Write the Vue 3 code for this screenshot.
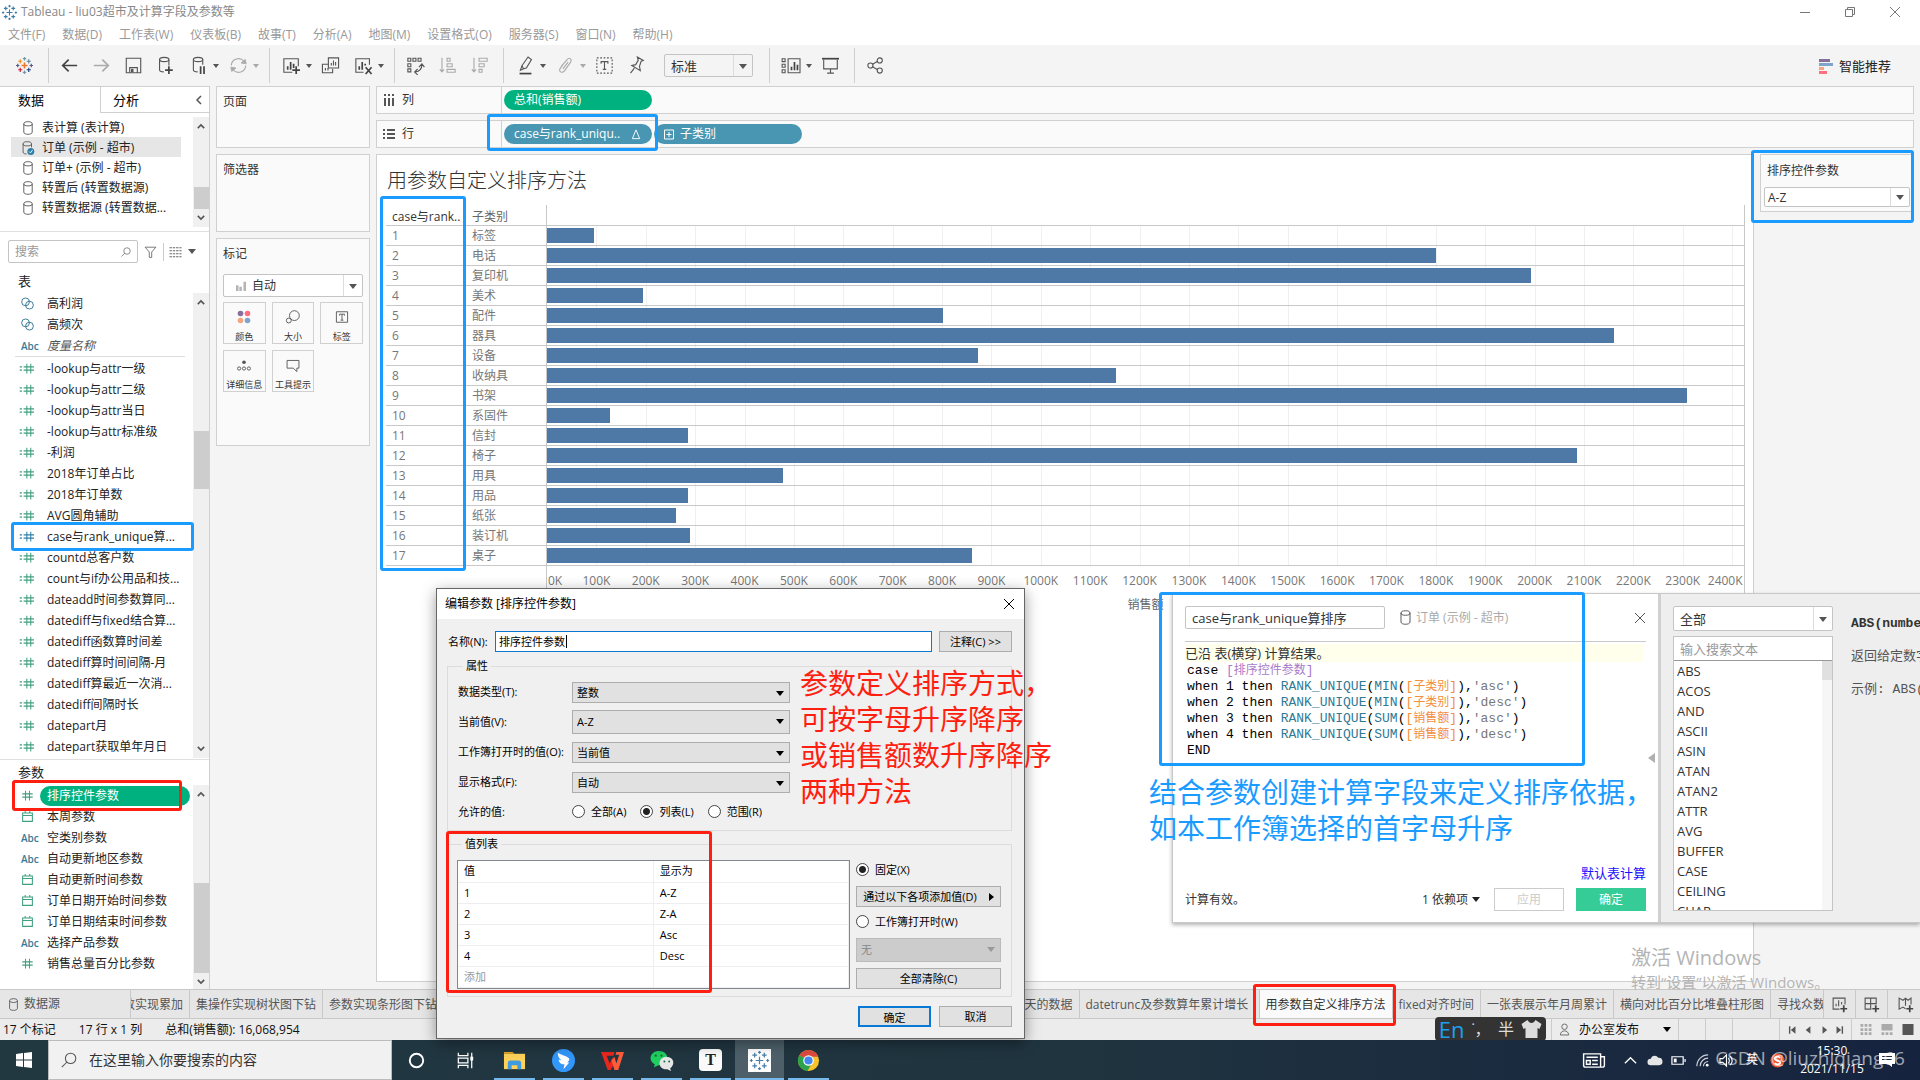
<script setup>
import { ref } from 'vue'

const menus = ['文件(F)', '数据(D)', '工作表(W)', '仪表板(B)', '故事(T)', '分析(A)', '地图(M)', '设置格式(O)', '服务器(S)', '窗口(N)', '帮助(H)']

// 20x20 icons
const icons = {
  logo: '<g fill="none" stroke-width="1.4"><path stroke="#e8762c" stroke-width="1.8" d="M10 6.500v7M6.500 10h7"/><path stroke="#c72035" d="M5 12.500v5M2.500 15h5"/><path stroke="#5b879b" d="M15 2.500v5M12.500 5h5"/><path stroke="#eb912c" d="M5 2.500v5M2.500 5h5"/><path stroke="#1f457e" d="M15 12.500v5M12.500 15h5"/><path stroke="#7199a6" d="M10 0v4M8 2h4M10 16v4M8 18h4"/><path stroke="#59598b" d="M2 8v4M0 10h4M18 8v4M16 10h4"/></g>',
  back: '<path class="s2" d="M19 10H2M9 3l-7 7 7 7"/>',
  forward: '<path class="s2 dim" d="M1 10h17M11 3l7 7-7 7"/>',
  save: '<path class="s" d="M1.500 1.500h17v17h-17zM5.500 18.500v-6h9v6"/><path d="M7 14h3v4H7z" fill="#555"/>',
  dbAdd: '<ellipse class="s" cx="8.500" cy="3" rx="5.500" ry="2.500"/><path class="s" d="M3 3v12c0 1.500 2 2.500 5 2.500M14 3v7"/><path class="s2" d="M14 11v9M9.500 15.500h9"/>',
  dbPause: '<ellipse class="s" cx="9.500" cy="3" rx="5.500" ry="2.500"/><path class="s" d="M4 3v12c0 1.500 2 2.500 5 2.500M15 3v6"/><path class="s2" d="M12.500 11v9M16.500 11v9"/>',
  refresh: '<path class="s dim" d="M1.500 10a8.500 8.500 0 0 1 15-5M18.500 10a8.500 8.500 0 0 1-15 5"/><path fill="#aaa" d="M19 8l-6-1 5-4zM1 12l6 1-5 4z"/>',
  newSheet: '<path class="s" d="M11 18H1v-16h17V11"/><path class="s2" d="M5.500 15v-4M9 15V6M12.500 13V8M15.500 11v9M11 15.500h9"/>',
  duplicate: '<path class="s" d="M8 8.500H0.500v10h12V14M7.500 1h12v12h-12z"/><path class="s" d="M4 16v-3M7 16v-3M11 10V7M13.500 10V4M16 10V6"/>',
  clearSheet: '<path class="s" d="M10 18H1v-16h16V9"/><path class="s2" d="M5 15v-4M8.500 15V6M12 10V8M12.500 12l7 8M19.500 12l-7 8"/>',
  swap: '<path class="s" d="M1 1.500h3.500V5H1zM7 1.500h3.500V5H7zM13 1.500h3.500V5H13zM1 8h3.500v3.500H1zM1 14h3.500v3.500H1zM17.500 9c0 5-2 8-8 8.500M14 12l3.500-4 3 4M12.500 14L9 17.500l3.500 3.500"/>',
  sortAsc: '<path class="s dim" d="M3.500 1v16M1 14.500l2.500 3 2.500-3M9.500 1.500h3.500v3.500H9.500zM9.500 8h6v3.500h-6zM9.500 14.500h9.500V18H9.500z"/>',
  sortDesc: '<path class="s dim" d="M3.500 1v16M1 14.500l2.500 3 2.500-3M9.500 1.500h9.500v3.500H9.500zM9.500 8h6v3.500h-6zM9.500 14.500h3.500V18H9.500z"/>',
  highlight: '<path class="s" d="M7.500 14L6 10l7-10 4 3-6 10zM7.500 14L4 15.500 6 10"/><path class="s2" d="M3 19.500h14"/>',
  clip: '<path class="s dim" d="M5 11l7-8c2-3 6-1 4 3l-7 10c-3 4-8 1-5-3l6-8M7 14l6-8"/>',
  text: '<path class="s" stroke-dasharray="2 2" d="M1 1h18v18H1z"/><path class="s" d="M6 8V5.500h8V8M10 5.500v9M8 14.500h4"/>',
  pin: '<path class="s" d="M11 0l7 4-2.500 1-2 6 1 5-10-6 4.500-1 3-5zM7.500 13L3 19"/>',
  cards: '<path class="s" d="M-1 2h3.500v3.500H-1zM-1 8.500h3.500V12H-1zM-1 15h3.500v3.500H-1zM6 2h14v16.500H6z"/><path class="s2" d="M10 15.500v-4M13.500 15.500V6M17 15.500V9"/>',
  present: '<path class="s2" d="M0 2h20"/><path class="s" d="M2 3v11h16V3M10 14v5M6 19h8"/>',
  share: '<g class="s"><circle cx="4" cy="10" r="3"/><circle cx="15" cy="4" r="3"/><circle cx="15" cy="16" r="3"/><path d="M6.500 8.500l6-3.500M6.500 11.500l6 3.500"/></g>',
  db: '<ellipse class="s" cx="10" cy="4" rx="6" ry="3"/><path class="s" d="M4 4v12c0 4 12 4 12 0V4"/>',
  dbOk: '<ellipse class="s" cx="9" cy="4" rx="6" ry="3"/><path class="s" d="M3 4v12c0 2 3 2.500 5 2.500M15 4v5"/><circle cx="14" cy="15" r="5" fill="#2f80a8"/><path d="M11.500 15l2 2 3-4" fill="none" stroke="#fff" stroke-width="1.300"/>',
  set: '<g fill="none" stroke="#3a7a96" stroke-width="1.500"><circle cx="7" cy="7.500" r="6"/><circle cx="13" cy="12.500" r="6"/></g>',
  calc: '<path class="field" d="M-2 7.500h3.500M-2 12.500h3.500M4 7.500h16M4 12.500h16M9 2.500v15M15 2.500v15"/>',
  num: '<path class="field" d="M2 7.500h16M2 12.500h16M7 2.500v15M13 2.500v15"/>',
  date: '<path class="field" d="M2.500 4.500h15v13h-15zM2.500 8.500h15M6.500 1.500v4M13.500 1.500v4"/>',
  filter: '<path class="s" d="M1 2h18l-7 8v9H8v-9z"/>',
  grid: '<path fill="none" stroke="#666" stroke-width="1.800" stroke-dasharray="4 1.500" d="M0 3h20M0 8h20M0 13h20M0 18h20"/>',
  search: '<circle class="s" cx="12" cy="8" r="6.500"/><path class="s" d="M7.500 12.500L1 19"/>',
}

const toolbar = [
  { icon: 'logo' }, { sep: true },
  { icon: 'back' }, { icon: 'forward' }, { icon: 'save' }, { icon: 'dbAdd' },
  { icon: 'dbPause', caret: true }, { icon: 'refresh', caret: true, dim: true }, { sep: true },
  { icon: 'newSheet', caret: true }, { icon: 'duplicate' }, { icon: 'clearSheet', caret: true }, { sep: true },
  { icon: 'swap' }, { icon: 'sortAsc' }, { icon: 'sortDesc' }, { sep: true },
  { icon: 'highlight', caret: true }, { icon: 'clip', caret: true, dim: true }, { icon: 'text' }, { icon: 'pin' },
  { fit: true }, { sep: true },
  { icon: 'cards', caret: true }, { icon: 'present' }, { sep: true },
  { icon: 'share' },
]

const sources = ['表计算 (表计算)', '订单 (示例 - 超市)', '订单+ (示例 - 超市)', '转置后 (转置数据源)', '转置数据源 (转置数据...']

const dimensions = [
  { icon: 'set', name: '高利润' },
  { icon: 'set', name: '高频次' },
  { abc: true, name: '度量名称', italic: true },
]

const measures = [
  '-lookup与attr一级', '-lookup与attr二级', '-lookup与attr当日', '-lookup与attr标准级', '-利润',
  '2018年订单占比', '2018年订单数', 'AVG圆角辅助', 'case与rank_unique算...', 'countd总客户数',
  'count与if办公用品和技...', 'dateadd时间参数算同...', 'datediff与fixed结合算...', 'datediff函数算时间差',
  'datediff算时间间隔-月', 'datediff算最近一次消...', 'datediff间隔时长', 'datepart月', 'datepart获取单年月日',
]

const params = [
  { icon: 'num', name: '排序控件参数', active: true },
  { icon: 'date', name: '本周参数' },
  { abc: true, name: '空类别参数' },
  { abc: true, name: '自动更新地区参数' },
  { icon: 'date', name: '自动更新时间参数' },
  { icon: 'date', name: '订单日期开始时间参数' },
  { icon: 'date', name: '订单日期结束时间参数' },
  { abc: true, name: '选择产品参数' },
  { icon: 'num', name: '销售总量百分比参数' },
]

// sales in thousands
const axisMax = 2424
const rows = [
  ['标签', 96], ['电话', 1800], ['复印机', 1992], ['美术', 195], ['配件', 802], ['器具', 2160],
  ['设备', 872], ['收纳具', 1152], ['书架', 2308], ['系固件', 128], ['信封', 286], ['椅子', 2086],
  ['用具', 478], ['用品', 286], ['纸张', 262], ['装订机', 290], ['桌子', 860],
]
const ticks = Array.from({ length: 25 }, (_, i) => i * 100)
const pct = (v) => (v / axisMax) * 100 + '%'

const functions = ['ABS', 'ACOS', 'AND', 'ASCII', 'ASIN', 'ATAN', 'ATAN2', 'ATTR', 'AVG', 'BUFFER', 'CASE', 'CEILING', 'CHAR']

const formula = [
  [1, 'MIN', '子类别', 'asc'],
  [2, 'MIN', '子类别', 'desc'],
  [3, 'SUM', '销售额', 'asc'],
  [4, 'SUM', '销售额', 'desc'],
]

const selects = [
  { id: 'dtype', label: '数据类型(T):', value: '整数' },
  { id: 'current', label: '当前值(V):', value: 'A-Z', tall: true },
  { id: 'onopen', label: '工作簿打开时的值(O):', value: '当前值' },
  { id: 'format', label: '显示格式(F):', value: '自动' },
]
const values = [['1', 'A-Z'], ['2', 'Z-A'], ['3', 'Asc'], ['4', 'Desc']]

const paramName = ref('排序控件参数')
const calcName = ref('case与rank_unique算排序')
const allowed = ref('list')
const listMode = ref('fixed')
</script>

<template>
  <div class="app">
    <header class="titlebar">
      <svg class="app-icon" viewBox="0 0 20 20"><path fill="none" stroke="#3d7ea6" stroke-width="1.500" d="M10 6v8M6 10h8M5 2v5M2.500 4.500h5M15 2v5M12.500 4.500h5M5 13v5M2.500 15.500h5M15 13v5M12.500 15.500h5M10 0v3M8.500 1.500h3M10 17v3M8.500 18.500h3M1.500 8.500v3M0 10h3M18.500 8.500v3M17 10h3" /></svg>
      <span class="title">Tableau - liu03超市及计算字段及参数等</span>
      <div class="win-buttons">
        <button aria-label="最小化"><svg viewBox="0 0 12 12"><path d="M1 6.500h10" /></svg></button>
        <button aria-label="还原"><svg viewBox="0 0 12 12"><path d="M1.500 3.500h7v7h-7zM3.500 3.500v-2h7v7h-2" /></svg></button>
        <button aria-label="关闭"><svg viewBox="0 0 12 12"><path d="M1 1l10 10M11 1L1 11" /></svg></button>
      </div>
    </header>

    <nav class="menubar">
      <a v-for="m in menus" :key="m" href="#">{{ m }}</a>
    </nav>

    <div class="toolbar">
      <template v-for="(t, i) in toolbar" :key="i">
        <span v-if="t.sep" class="sep" />
        <div v-else-if="t.fit" class="combo fit">
          <select aria-label="适应"><option>标准</option></select>
        </div>
        <button v-else-if="t.caret" class="tool split" :class="{ dim: t.dim }">
          <svg viewBox="0 0 20 20" v-html="icons[t.icon]" />
          <i class="caret" />
        </button>
        <button v-else class="tool"><svg viewBox="0 0 20 20" v-html="icons[t.icon]" /></button>
      </template>
      <button class="showme">
        <svg viewBox="0 0 14 16">
          <path fill="#866f9b" d="M0 1h11v3H0z" /><path fill="#80a3cc" d="M0 5h14v3H0z" />
          <path fill="#f5a57d" d="M0 9h5v3H0z" /><path fill="#ff6f80" d="M0 13h8v3H0z" />
        </svg>
        智能推荐
      </button>
    </div>

    <div class="body">
      <aside class="sidebar">
        <div class="side-tabs">
          <button class="on">数据</button>
          <button class="off">分析<svg viewBox="0 0 8 10"><path d="M6 1L2 5l4 4" /></svg></button>
        </div>

        <div class="scroll-area sources">
          <ul>
            <li v-for="(s, i) in sources" :key="s" :class="{ selected: i === 1 }">
              <svg viewBox="0 0 20 20" v-html="i === 1 ? icons.dbOk : icons.db" />{{ s }}
            </li>
          </ul>
          <div class="scrollbar">
            <svg viewBox="0 0 10 8"><path d="M1 6l4-4 4 4" /></svg>
            <i class="thumb" />
            <svg viewBox="0 0 10 8"><path d="M1 2l4 4 4-4" /></svg>
          </div>
        </div>

        <div class="search-row">
          <label class="search-box">
            <input type="text" placeholder="搜索" aria-label="搜索" />
            <svg viewBox="0 0 20 20" v-html="icons.search" />
          </label>
          <button aria-label="筛选"><svg viewBox="0 0 20 20" v-html="icons.filter" /></button>
          <span class="bar" />
          <button aria-label="视图"><svg viewBox="0 0 20 20" v-html="icons.grid" /></button>
          <i class="caret" />
        </div>

        <h3>表</h3>
        <div class="scroll-area tables">
          <ul>
            <li v-for="d in dimensions" :key="d.name">
              <span v-if="d.abc" class="abc">Abc</span>
              <svg v-else viewBox="0 0 20 20" v-html="icons[d.icon]" />
              <span :class="{ italic: d.italic }">{{ d.name }}</span>
            </li>
            <li class="rule" />
            <li v-for="(m, i) in measures" :key="m" :class="{ discrete: i === 8 }">
              <svg viewBox="0 0 20 20" v-html="icons.calc" />
              <span>{{ m }}</span>
              <i v-if="i === 8" class="callout blue" />
            </li>
          </ul>
          <div class="scrollbar">
            <svg viewBox="0 0 10 8"><path d="M1 6l4-4 4 4" /></svg>
            <i class="thumb" />
            <svg viewBox="0 0 10 8"><path d="M1 2l4 4 4-4" /></svg>
          </div>
        </div>

        <h3 class="params-title">参数</h3>
        <div class="scroll-area params">
          <ul>
            <li v-for="p in params" :key="p.name" :class="{ active: p.active }">
              <span v-if="p.abc" class="abc">Abc</span>
              <svg v-else viewBox="0 0 20 20" v-html="icons[p.icon]" />
              <span>{{ p.name }}</span>
              <i v-if="p.active" class="callout red" />
            </li>
          </ul>
          <div class="scrollbar">
            <svg viewBox="0 0 10 8"><path d="M1 6l4-4 4 4" /></svg>
            <i class="thumb" />
            <svg viewBox="0 0 10 8"><path d="M1 2l4 4 4-4" /></svg>
          </div>
        </div>
      </aside>

      <section class="cards">
        <div class="card pages">页面</div>
        <div class="card filters">筛选器</div>
        <div class="card marks">
          <div>标记</div>
          <div class="combo mark-type">
            <svg viewBox="0 0 12 12"><path fill="#b4b4b4" d="M0 5h3v7H0zM4 7h3v5H4zM9 1h3v11H9z" /></svg>
            <select aria-label="标记类型"><option>自动</option></select>
          </div>
          <div class="mark-grid">
            <button>
              <svg viewBox="0 0 20 20"><circle cx="5" cy="5" r="4" fill="#866f9b" /><circle cx="15" cy="5" r="4" fill="#ff6f80" /><circle cx="5" cy="15" r="4" fill="#f5a57d" /><circle cx="15" cy="15" r="4" fill="#80a3cc" /></svg>颜色
            </button>
            <button>
              <svg viewBox="0 0 20 20"><circle class="s" cx="12" cy="8" r="7" /><circle class="s" cx="4" cy="15" r="3.500" /></svg>大小
            </button>
            <button>
              <svg viewBox="0 0 20 20"><path class="s" d="M2 2.500h16v15H2zM6.500 8V6h7v2M10 6v8.500M8 14.500h4" /></svg>标签
            </button>
            <button>
              <svg viewBox="0 0 20 20"><circle cx="10" cy="6" r="2.600" fill="#555" /><circle class="s" cx="3" cy="15" r="2.300" /><circle class="s" cx="10" cy="15" r="2.300" /><circle class="s" cx="17" cy="15" r="2.300" /></svg>详细信息
            </button>
            <button>
              <svg viewBox="0 0 20 20"><path class="s" d="M1.500 3.500h17v11h-3v5l-5-5h-9z" /></svg>工具提示
            </button>
          </div>
        </div>
      </section>

      <main class="main">
        <div class="shelf">
          <div class="shelf-name">
            <svg viewBox="0 0 12 12"><path d="M2 0v2M6 0v2M10 0v2M2 4v8M6 4v8M10 4v8" /></svg>列
          </div>
          <button class="pill green">总和(销售额)</button>
        </div>
        <div class="shelf">
          <div class="shelf-name">
            <svg viewBox="0 0 12 12"><path d="M0 2h2M0 6h2M0 10h2M4 2h8M4 6h8M4 10h8" /></svg>行
          </div>
          <button class="pill">case与rank_uniqu..<svg viewBox="0 0 10 12"><path d="M5 1l4 9.500H1z" /></svg></button>
          <button class="pill sub"><svg viewBox="0 0 10 10"><path d="M0.500 0.500h9v9h-9zM5 2.500v5M2.500 5h5" /></svg>子类别</button>
          <i class="callout blue" />
        </div>

        <div class="canvas">
          <div class="sheet">
            <h1>用参数自定义排序方法</h1>
            <div class="chart">
              <div class="row head">
                <span class="rank">case与rank..</span>
                <span class="cat">子类别</span>
                <span class="plot" />
              </div>
              <div v-for="([name, v], i) in rows" :key="name" class="row">
                <span class="rank">{{ i + 1 }}</span>
                <span class="cat">{{ name }}</span>
                <span class="plot">
                  <i v-for="t in ticks.slice(1)" :key="t" class="gridline" :style="{ left: pct(t) }" />
                  <i class="mark" :style="{ width: pct(v) }" />
                </span>
              </div>
              <i class="callout blue" />
            </div>
            <div class="axis">
              <div class="axis-plot">
                <span v-for="t in ticks" :key="t" class="tick" :class="{ first: t === 0, last: t === 2400 }" :style="{ left: pct(t) }">{{ t }}K</span>
                <span class="axis-title">销售额</span>
              </div>
            </div>
          </div>
          <div class="controls">
            <div class="control-card">
              <label for="sort-param">排序控件参数</label>
              <div class="combo"><select id="sort-param"><option>A-Z</option></select></div>
              <i class="callout blue" />
            </div>
          </div>
        </div>
      </main>
    </div>

    <div class="tabs">
      <a class="tab source" href="#"><svg viewBox="0 0 20 20" v-html="icons.db" />数据源</a>
      <a class="tab cut" href="#"><span>参数实现累加</span></a>
      <a class="tab" href="#">集操作实现树状图下钻</a>
      <a class="tab" href="#">参数实现条形图下钻</a>
      <a class="tab fill" href="#">天的数据</a>
      <a class="tab wide" href="#">datetrunc及参数算年累计增长</a>
      <a class="tab current" href="#">用参数自定义排序方法<i class="callout red" /></a>
      <a class="tab" href="#">fixed对齐时间</a>
      <a class="tab" href="#">一张表展示年月周累计</a>
      <a class="tab" href="#">横向对比百分比堆叠柱形图</a>
      <a class="tab last" href="#">寻找众数</a>
      <button aria-label="新建工作表"><svg viewBox="0 0 20 20"><path class="s" d="M10 15.500H2.500v-13h14V10M6 12V9M9 12V5M12.500 10V7" /><path class="s2" d="M15 11v8M11 15h8" /></svg></button>
      <button aria-label="新建仪表板"><svg viewBox="0 0 20 20"><path class="s" d="M10 15.500H2.500v-13h13V10M9 2.500v13M2.500 9h13" /><path class="s2" d="M15 11v8M11 15h8" /></svg></button>
      <button aria-label="新建故事"><svg viewBox="0 0 20 20"><path class="s" d="M10 15l-3-2-4.500 2.500v-13L7 5l3-2.500L13 5l3.500-2.500V10M10 2.500v9" /><path class="s2" d="M15 11v8M11 15h8" /></svg></button>
    </div>

    <footer class="status">
      <span>17 个标记</span>
      <span>17 行 x 1 列</span>
      <span>总和(销售额): 16,068,954</span>
      <div class="status-right">
        <div class="user">
          <svg viewBox="0 0 12 14"><circle cx="6" cy="4" r="3" /><path d="M1.500 13c0-6 9-6 9 0z" /></svg>
          办公室发布<i class="caret" />
        </div>
        <span class="cell" /><span class="cell" /><span class="cell gap" />
        <div class="pager">
          <svg viewBox="0 0 60 10">
            <path d="M1 1h1.500v8H1zM8 1v8L3 5zM24 1v8l-5-4zM37 1v8l5-4zM52 1v8l5-4zM57.500 1H59v8h-1.500z" />
          </svg>
        </div>
        <div class="views">
          <svg viewBox="0 0 12 12"><path fill="none" stroke="#aaa" stroke-width="3" stroke-dasharray="3 1.500" d="M0 1.500h12M0 6h12M0 10.500h12" /></svg>
          <svg viewBox="0 0 12 12"><path fill="#aaa" d="M0 0h12v7H0zM0 9h3v3H0zM4.500 9h3v3h-3zM9 9h3v3H9z" /></svg>
          <svg viewBox="0 0 12 12"><path fill="#555" d="M0 0h12v12H0z" /></svg>
        </div>
      </div>
      <div class="ime">
        <b>En</b><span>˙，</span><span>半</span>
        <svg viewBox="0 0 20 18"><path fill="#ddd" d="M6 0l-6 4 2 5 2-1v10h12V8l2 1 2-5-6-4c-2 4-6 4-8 0z" /></svg>
      </div>
    </footer>

    <div class="taskbar">
      <button class="start" aria-label="开始"><svg viewBox="0 0 16 16"><path fill="#fff" d="M0 2l7-1v6.500H0zM8 1l8-1v7.500H8zM0 8.500h7V15l-7-1zM8 8.500h8V16l-8-1z" /></svg></button>
      <label class="task-search">
        <svg viewBox="0 0 20 20" v-html="icons.search" />
        <input type="text" placeholder="在这里输入你要搜索的内容" aria-label="搜索内容" />
      </label>
      <button class="app-btn plain" aria-label="Cortana"><svg viewBox="0 0 24 24"><circle cx="12" cy="12" r="7" fill="none" stroke="#fff" stroke-width="2" /></svg></button>
      <button class="app-btn plain" aria-label="任务视图"><svg viewBox="0 0 24 24"><path fill="none" stroke="#fff" stroke-width="1.300" d="M4.500 4v3h10V4M4.500 20v-3h10v3M4.500 9.500h10v5h-10zM18.500 4v16" /><path fill="#fff" d="M17 8h3v4h-3z" /></svg></button>
      <button class="app-btn" aria-label="文件资源管理器"><svg viewBox="0 0 24 24"><path fill="#e9a820" d="M1 3h9l2 2H1z" /><path fill="#fdd25a" d="M1 5h22v16H1z" /><path fill="#3e9be0" d="M5 21v-6c0-2 1-3 3-3h8c2 0 3 1 3 3v6h-4v-4H9v4z" /></svg></button>
      <button class="app-btn" aria-label="钉钉"><svg viewBox="0 0 24 24"><circle cx="12" cy="12" r="12" fill="#3296fa" /><path fill="#fff" d="M6 4c3 2 8 3 11 5 2 1 1 3-1 5h2l-6 7 1-5h-2c-3-1-4-3-4-5l3 1c-3-2-4-5-4-8z" /></svg></button>
      <button class="app-btn" aria-label="WPS"><svg viewBox="0 0 24 24"><path fill="#e8281e" d="M0 3h14l-1 4H6l3 8 3-6 2 6-4 7H7z" /><path fill="#ff5d3a" d="M16 3h8l-6 19h-4l-3-10 3-4 2 7 3-9h-4z" /></svg></button>
      <button class="app-btn" aria-label="微信"><svg viewBox="0 0 24 24"><path fill="#1fcf5f" d="M9 2c12 0 12 14 0 15l-5 2 1-3C-3 11 1 2 9 2z" /><path fill="#e6e6e6" d="M17 8c9 0 9 9 4 12l1 3-4-2c-10 1-11-12-1-13z" /><g fill="#176b38"><circle cx="6" cy="7" r="1.200" /><circle cx="12" cy="7" r="1.200" /><circle cx="15" cy="13" r="1" /><circle cx="20" cy="13" r="1" /></g></svg></button>
      <button class="app-btn" aria-label="Typora"><span class="typora">T</span></button>
      <button class="app-btn focused" aria-label="Tableau"><svg class="tb" viewBox="-2 -2 24 24"><path fill="#fff" d="M-2-2h24v24H-2z" /><path fill="none" stroke="#4a7fa8" stroke-width="1.300" d="M10 6v8M6 10h8M5 2v5M2.500 4.500h5M15 2v5M12.500 4.500h5M5 13v5M2.500 15.500h5M15 13v5M12.500 15.500h5M10 0v3M8.500 1.500h3M10 17v3M8.500 18.500h3M1.500 8.500v3M0 10h3M18.500 8.500v3M17 10h3" /></svg></button>
      <button class="app-btn" aria-label="Chrome"><svg viewBox="0 0 24 24"><circle cx="12" cy="12" r="11" fill="#f7c52b" /><path fill="#dd4b3e" d="M12 12L2.500 6.500a11 11 0 0 1 19 0L22 8H12z" /><path fill="#2ba24c" d="M2.500 6.500a11 11 0 0 0 8.500 16.500l5-9-4-2z" /><circle cx="12" cy="12" r="5.500" fill="#fff" /><circle cx="12" cy="12" r="4.300" fill="#4688f1" /></svg></button>

      <div class="tray">
        <svg class="news" viewBox="0 0 24 18"><path fill="none" stroke="#fff" stroke-width="1.500" d="M1 2h18v14H3c-1 0-2-1-2-2zM19 5h4v9c0 1-1 2-2 2h-3M4 5.500h12M4 9h4v4H4zM10 9h6M10 13h6" /></svg>
        <svg viewBox="0 0 16 16"><path fill="none" stroke="#fff" stroke-width="1.400" d="M2 11l6-6 6 6" /></svg>
        <svg viewBox="0 0 16 16"><path fill="#e6e6e6" d="M4 13a3.500 3.500 0 0 1 0-7 4.500 4.500 0 0 1 8-1 4 4 0 0 1 1 8z" /></svg>
        <svg viewBox="0 0 16 16"><path fill="none" stroke="#fff" stroke-width="1.300" d="M1 4h12v8H1zM15 6.500v3" /><path fill="#fff" d="M3 6h3v4H3z" /></svg>
        <svg viewBox="0 0 16 16"><path fill="none" stroke="#cfd4dc" stroke-width="1.200" d="M2 14A12 12 0 0 1 14 2M5.500 14A8.500 8.500 0 0 1 14 5.500M9 14a5 5 0 0 1 5-5" /><circle cx="13" cy="13" r="1.500" fill="#fff" /></svg>
        <svg viewBox="0 0 16 16"><path fill="none" stroke="#fff" stroke-width="1.200" d="M1 6h3l4-4v12l-4-4H1zM10 5q2 3 0 6M12 3q4 5 0 10" /></svg>
        <span class="lang">英</span>
        <svg viewBox="0 0 16 16"><circle cx="8" cy="8" r="7.500" fill="#f0532b" /><path fill="none" stroke="#fff" stroke-width="2" d="M11 5c-3-2-6-1-6 1s6 2 6 4-3 3-6 1" /></svg>
        <div class="clock"><span>15:30</span><span>2021/11/15</span></div>
        <svg class="note" viewBox="0 0 16 16"><path fill="#fff" d="M0 1h16v11h-3v3l-4-3H0z" /><path stroke="#1a2a45" d="M3 4.500h10M3 7.500h10" /></svg>
        <span class="csdn">CSDN @liuzhiqiang66</span>
      </div>
    </div>

    <div class="activate">
      <p>激活 Windows</p>
      <small>转到“设置”以激活 Windows。</small>
    </div>

    <!-- calculated field editor -->
    <section class="calc">
      <div class="calc-left">
        <div class="calc-head">
          <input v-model="calcName" type="text" aria-label="字段名称" />
          <svg viewBox="0 0 20 20" v-html="icons.db" />
          <span>订单 (示例 - 超市)</span>
          <button aria-label="关闭"><svg viewBox="0 0 12 12"><path d="M1 1l10 10M11 1L1 11" /></svg></button>
        </div>
        <div class="calc-body">
          <p class="hint">已沿 表(横穿) 计算结果。</p>
          <pre><span>case </span><span class="prm">[<em>排序控件参数</em>]</span>
<template v-for="[n, fn, f, s] in formula" :key="n">when {{ n }} then <span class="fn">RANK_UNIQUE</span>(<span class="fn">{{ fn }}</span>(<span class="fld">[<em>{{ f }}</em>]</span>),<span class="str">'{{ s }}'</span>)
</template>END</pre>
          <i class="collapse" />
        </div>
        <a class="default-calc" href="#">默认表计算</a>
        <div class="calc-foot">
          <span class="valid">计算有效。</span>
          <button class="deps">1 依赖项<i class="caret" /></button>
          <button class="apply" disabled>应用</button>
          <button class="ok">确定</button>
        </div>
      </div>
      <div class="calc-right">
        <div class="fn-col">
          <div class="combo"><select aria-label="函数类别"><option>全部</option></select></div>
          <div class="fn-box">
            <input type="text" placeholder="输入搜索文本" aria-label="输入搜索文本" />
            <div class="fn-list">
              <ul><li v-for="f in functions" :key="f">{{ f }}</li></ul>
              <i />
            </div>
          </div>
        </div>
        <div class="fn-doc">
          <b>ABS(number)</b>
          <p>返回给定数字的绝对值。</p>
          <p>示例: ABS(-7) = 7</p>
        </div>
      </div>
      <i class="callout blue" />
      <p class="remark">结合参数创建计算字段来定义排序依据，<br />如本工作簿选择的首字母升序</p>
    </section>

    <!-- parameter dialog -->
    <section class="dialog">
      <div class="dialog-title">
        <span>编辑参数 [排序控件参数]</span>
        <button aria-label="关闭"><svg viewBox="0 0 12 12"><path d="M1 1l10 10M11 1L1 11" /></svg></button>
      </div>
      <div class="dialog-body">
        <div class="name-row">
          <label for="pname">名称(N):</label>
          <div class="name-input"><input id="pname" v-model="paramName" type="text" /><i /></div>
          <button class="btn">注释(C) &gt;&gt;</button>
        </div>

        <fieldset class="props">
          <legend>属性</legend>
          <div v-for="s in selects" :key="s.id" class="prop">
            <label :for="s.id">{{ s.label }}</label>
            <div class="drop" :class="{ tall: s.tall }"><select :id="s.id"><option>{{ s.value }}</option></select></div>
          </div>
          <div class="prop radios">
            <span class="lab">允许的值:</span>
            <label><input v-model="allowed" type="radio" value="all" name="allowed" />全部(A)</label>
            <label><input v-model="allowed" type="radio" value="list" name="allowed" />列表(L)</label>
            <label><input v-model="allowed" type="radio" value="range" name="allowed" />范围(R)</label>
          </div>
        </fieldset>

        <fieldset class="list">
          <legend>值列表</legend>
          <div class="list-row">
            <div class="table-box">
              <table>
                <thead><tr><th>值</th><th>显示为</th></tr></thead>
                <tbody>
                  <tr v-for="v in values" :key="v[0]"><td>{{ v[0] }}</td><td>{{ v[1] }}</td></tr>
                  <tr class="add"><td>添加</td><td></td></tr>
                </tbody>
              </table>
            </div>
            <div class="list-side">
              <label><input v-model="listMode" type="radio" value="fixed" name="mode" />固定(X)</label>
              <button class="btn">通过以下各项添加值(D)<i class="arrow" /></button>
              <label><input v-model="listMode" type="radio" value="open" name="mode" />工作簿打开时(W)</label>
              <div class="drop tall off"><select disabled aria-label="来源"><option>无</option></select></div>
              <button class="btn">全部清除(C)</button>
            </div>
          </div>
          <i class="callout red" />
        </fieldset>

        <div class="dialog-foot">
          <button class="btn primary">确定</button>
          <button class="btn">取消</button>
        </div>
      </div>
      <p class="remark">参数定义排序方式，<br />可按字母升序降序<br />或销售额数升序降序<br />两种方法</p>
    </section>
  </div>
</template>

<style>
body {
  margin: 0;
  overflow: hidden;
}
</style>

<style scoped>
.app {
  position: relative;
  display: flex;
  flex-direction: column;
  height: 100vh;
  overflow: hidden;
  background: #f4f4f4;
  color: #333;
  font-family: "Open Sans", "Noto Sans CJK SC", sans-serif;
  font-size: 12px;
  line-height: 20px;
  white-space: nowrap;
}
.app * {
  box-sizing: border-box;
}
button, input, select {
  font: inherit;
  color: inherit;
  border: 0;
  padding: 0;
  margin: 0;
  background: none;
  border-radius: 0;
}
input:focus {
  outline: none;
}
a {
  color: inherit;
  text-decoration: none;
}
ul, p, h1, h3, pre {
  list-style: none;
  margin: 0;
  padding: 0;
}
svg {
  display: block;
  flex: none;
  overflow: visible;
}
:deep(.s) {
  fill: none;
  stroke: #555;
  stroke-width: 1.3;
}
:deep(.s2) {
  fill: none;
  stroke: #444;
  stroke-width: 2;
}
:deep(.dim) {
  stroke: #aaa;
}
:deep(.field) {
  fill: none;
  stroke: #3f9f7f;
  stroke-width: 1.6;
}
.caret {
  border: 4px solid transparent;
  border-top: 5px solid #555;
  border-bottom: 0;
}

.callout {
  position: absolute;
  border: 3px solid #1a9bff;
  border-radius: 3px;
  pointer-events: none;
  z-index: 3;
}
.callout.red {
  border-color: #ff1f10;
}
.remark {
  position: absolute;
  font-size: 28px;
  line-height: 36px;
  color: #ff1f10;
}

/* title and menu */
.titlebar {
  display: flex;
  align-items: center;
  height: 24px;
  padding: 0 19px 0 2px;
  gap: 4px;
  background: #fff;
  color: #888;
}
.app-icon {
  width: 15px;
  height: 15px;
}
.win-buttons {
  display: flex;
  gap: 33px;
  margin-left: auto;
}
.win-buttons svg, .calc-head button svg, .dialog-title svg {
  width: 12px;
  height: 12px;
  fill: none;
  stroke: #777;
}
.menubar {
  display: flex;
  gap: 17px;
  height: 21px;
  padding-left: 8px;
  background: #fff;
  color: #999;
  line-height: 22px;
}

/* toolbar */
.toolbar {
  display: flex;
  align-items: center;
  height: 41px;
  padding: 0 29px 0 8px;
}
.tool {
  display: flex;
  align-items: center;
  justify-content: center;
  width: 32px;
  height: 32px;
}
.tool svg {
  width: 17px;
  height: 17px;
}
.split {
  width: 38px;
  margin-left: 2px;
  gap: 6px;
  padding-left: 4px;
}
.split .caret {
  border-width: 4px 3px 0;
}
.split.dim .caret {
  border-top-color: #aaa;
}
.sep {
  width: 1px;
  height: 35px;
  margin: 0 4px 0 8px;
  background: #d0d0d0;
}
.combo {
  position: relative;
  display: flex;
  align-items: center;
  border: 1px solid #c4c4c4;
  border-radius: 2px;
  background: #fff;
}
.combo select {
  flex: 1;
  height: 100%;
  padding: 0 6px;
  appearance: none;
}
.combo::before {
  content: "";
  position: absolute;
  right: 18px;
  top: 0;
  bottom: 0;
  border-left: 1px solid #dcdcdc;
}
.combo::after {
  content: "";
  position: absolute;
  right: 5px;
  top: 50%;
  margin-top: -2px;
  border: 4px solid transparent;
  border-top: 5px solid #555;
  border-bottom: 0;
}
.fit {
  width: 89px;
  height: 23px;
  margin: 0 8px 0 12px;
  background: transparent;
  font-size: 13px;
}
.showme {
  display: flex;
  align-items: center;
  gap: 6px;
  margin-left: auto;
  font-size: 13px;
  color: #222;
}
.showme svg {
  width: 14px;
  height: 16px;
}

/* body */
.body {
  display: flex;
  flex: 1;
  min-height: 0;
}
.sidebar {
  display: flex;
  flex-direction: column;
  width: 210px;
  background: #fff;
  border-right: 1px solid #d0d0d0;
  color: #222;
}
.side-tabs {
  display: flex;
  height: 27px;
  flex: none;
  font-size: 13px;
  color: #000;
}
.side-tabs button {
  border-top: 1px solid #d0d0d0;
  text-align: left;
}
.side-tabs .on {
  width: 100px;
  padding-left: 18px;
}
.side-tabs .off {
  display: flex;
  align-items: center;
  justify-content: space-between;
  flex: 1;
  padding: 0 6px 0 12px;
  border-left: 1px solid #d0d0d0;
  border-bottom: 1px solid #d0d0d0;
}
.side-tabs svg {
  width: 8px;
  height: 10px;
  fill: none;
  stroke: #555;
  stroke-width: 1.5;
}
.scroll-area {
  display: flex;
  flex: none;
}
.scroll-area ul {
  flex: 1;
  min-width: 0;
}
.scroll-area li {
  position: relative;
  display: flex;
  align-items: center;
  height: 21px;
}
.scrollbar {
  display: flex;
  flex-direction: column;
  justify-content: space-between;
  align-items: center;
  width: 16px;
  padding: 6px 0;
  background: #f0f0f0;
}
.scrollbar svg {
  width: 8px;
  height: 7px;
  fill: none;
  stroke: #555;
  stroke-width: 2;
}
.thumb {
  width: 15px;
  background: #cdcdcd;
}
.sources {
  height: 110px;
  margin-top: 4px;
}
.sources li {
  width: 170px;
  height: 20px;
  margin-left: 11px;
  padding: 2px 0 0 10px;
  gap: 7px;
}
.sources svg {
  width: 14px;
  height: 14px;
}
.sources .scrollbar svg {
  width: 8px;
  height: 7px;
}
.sources .selected {
  background: #e6e6e6;
}
.sources .thumb {
  height: 22px;
  margin-top: 52px;
}
.search-row {
  display: flex;
  align-items: center;
  height: 40px;
  margin-top: 4px;
  border-top: 1px solid #e0e0e0;
  padding: 0 13px 0 8px;
  justify-content: space-between;
}
.search-box {
  display: flex;
  align-items: center;
  width: 130px;
  height: 23px;
  padding: 0 6px;
  border: 1px solid #c4c4c4;
  border-radius: 2px;
}
.search-box input {
  flex: 1;
  min-width: 0;
}
input::placeholder {
  color: #999;
  opacity: 1;
}
.search-box svg {
  width: 10px;
  height: 10px;
}
.search-row button svg {
  width: 13px;
  height: 12px;
}
.bar {
  width: 1px;
  height: 18px;
  background: #ccc;
}
h3 {
  flex: none;
  height: 22px;
  padding-left: 18px;
  font-size: 13px;
  font-weight: 400;
}
.tables {
  height: 465px;
}
.tables li svg, .params li svg {
  width: 13px;
  height: 13px;
  margin: 0 13px 0 21px;
}
.abc {
  width: 26px;
  margin-left: 21px;
  font-size: 10px;
  font-weight: 600;
  color: #3a7a96;
}
.italic {
  font-style: italic;
  color: #555;
}
.tables .rule {
  height: 1px;
  margin: 0 8px 1px 15px;
  background: #ddd;
}
.discrete :deep(.field) {
  stroke: #2f7fa8;
}
.tables .callout {
  top: -4px;
  bottom: -4px;
  left: 11px;
  right: -1px;
}
.tables .thumb {
  height: 58px;
  margin-bottom: 132px;
}
.params-title {
  height: 26px;
  margin-top: 1px;
  border-top: 1px solid #e0e0e0;
  line-height: 24px;
}
.params {
  flex: 1;
}
.active span {
  flex: 1;
  height: 20px;
  margin: 0 3px 0 -7px;
  padding-left: 7px;
  border-radius: 10px;
  background: #00b180;
  color: #fff;
}
.params .callout {
  top: -5px;
  bottom: -5px;
  left: 12px;
  right: 11px;
}
.params .thumb {
  height: 90px;
  margin-top: 80px;
}
.params .scrollbar {
  padding-bottom: 4px;
}

/* cards column */
.cards {
  display: flex;
  flex-direction: column;
  gap: 6px;
  width: 166px;
  padding: 0 6px;
}
.card {
  border: 1px solid #d0d0d0;
  background: #fafafa;
  padding: 5px 6px;
}
.pages {
  height: 62px;
}
.filters {
  height: 78px;
}
.marks {
  height: 208px;
}
.mark-type {
  height: 23px;
  margin-top: 10px;
  padding-left: 12px;
  background: #fff;
}
.mark-type svg {
  width: 10px;
  height: 10px;
}
.mark-grid {
  display: grid;
  grid-template-columns: repeat(3, 1fr);
  gap: 6px;
  margin-top: 5px;
}
.mark-grid button {
  display: flex;
  flex-direction: column;
  align-items: center;
  justify-content: space-between;
  height: 42px;
  padding-top: 7px;
  border: 1px solid #d0d0d0;
  font-size: 9px;
  line-height: 12px;
}
.mark-grid svg {
  width: 14px;
  height: 14px;
}

/* shelves */
.main {
  display: flex;
  flex-direction: column;
  flex: 1;
  min-width: 0;
  gap: 6px;
  padding-right: 6px;
}
.shelf {
  position: relative;
  display: flex;
  align-items: center;
  height: 28px;
  flex: none;
  border: 1px solid #d0d0d0;
  background: #fafafa;
}
.shelf-name {
  display: flex;
  align-items: center;
  gap: 7px;
  width: 125px;
  height: 100%;
  padding-left: 6px;
  border-right: 1px solid #d0d0d0;
}
.shelf-name svg {
  width: 12px;
  height: 12px;
  stroke: #555;
  stroke-width: 2;
}
.pill {
  display: flex;
  align-items: center;
  justify-content: space-between;
  width: 148px;
  height: 20px;
  margin-left: 2px;
  padding: 0 11px 0 10px;
  border-radius: 10px;
  background: #4996b2;
  color: #fff;
}
.pill.green {
  background: #00b180;
}
.pill.sub {
  justify-content: flex-start;
  gap: 6px;
}
.pill svg {
  width: 10px;
  height: 11px;
  fill: none;
  stroke: #fff;
}
.shelf .callout {
  left: 110px;
  top: -7px;
  width: 171px;
  bottom: -4px;
}

/* sheet */
.canvas {
  display: flex;
  flex: 1;
  min-height: 0;
}
.sheet {
  flex: 1;
  min-width: 0;
  margin-bottom: 7px;
  padding: 10px 8px 0 9px;
  border: 1px solid #d0d0d0;
  background: #fff;
}
.sheet h1 {
  font-size: 20px;
  line-height: 32px;
  font-weight: 300;
  height: 40px;
  padding-left: 1px;
}
.chart {
  position: relative;
}
.row {
  display: flex;
  height: 20px;
  border-bottom: 1px solid #c8c8c8;
  color: #777;
}
.row.head {
  height: 21px;
  color: #333;
  line-height: 24px;
}
.rank {
  width: 80px;
  padding-left: 6px;
}
.cat {
  width: 80px;
  padding-left: 6px;
}
.head .cat {
  color: #666;
}
.plot {
  position: relative;
  flex: 1;
  border-left: 1px solid #c8c8c8;
  border-right: 1px solid #c8c8c8;
}
.gridline {
  position: absolute;
  top: 0;
  bottom: 0;
  border-left: 1px solid #f0f0f0;
}
.mark {
  position: absolute;
  left: 0;
  top: 2px;
  height: 15px;
  background: #4e79a7;
}
.chart .callout {
  left: -6px;
  top: -9px;
  bottom: -5px;
  width: 86px;
}
.axis {
  display: flex;
  height: 50px;
  padding-left: 160px;
  color: #777;
}
.axis-plot {
  position: relative;
  flex: 1;
  border: solid #c8c8c8;
  border-width: 0 1px;
}
.tick {
  position: absolute;
  top: 5px;
  transform: translateX(-50%);
}
.tick.first {
  transform: none;
  padding-left: 1px;
}
.tick.last {
  transform: translateX(-70%);
}
.axis-title {
  position: absolute;
  left: 50%;
  top: 29px;
  transform: translateX(-50%);
  color: #666;
}
.controls {
  width: 160px;
  padding-left: 6px;
}
.control-card {
  position: relative;
  height: 58px;
  padding: 6px 3px;
  border: 1px solid #d0d0d0;
  background: #fafafa;
}
.control-card label {
  display: block;
  padding-left: 3px;
}
.control-card .combo {
  height: 20px;
  margin-top: 6px;
}
.control-card .combo select {
  padding-left: 3px;
}
.control-card .callout {
  left: -10px;
  top: -5px;
  right: -1px;
  bottom: -12px;
}

/* tabs */
.tabs {
  display: flex;
  height: 30px;
  flex: none;
  border: solid #c8c8c8;
  border-width: 1px 0;
  background: #e6e6e6;
  color: #555;
}
.tab {
  position: relative;
  flex: none;
  padding: 0 6px;
  border-right: 1px solid #c8c8c8;
  line-height: 30px;
}
.tab.source {
  display: flex;
  align-items: center;
  gap: 4px;
  width: 131px;
  padding-left: 7px;
}
.tab.source svg {
  width: 13px;
  height: 13px;
}
.tab.cut {
  display: flex;
  justify-content: flex-end;
  width: 59px;
  overflow: hidden;
}
.tab.cut span {
  flex: none;
}
.tab.fill {
  flex: 1;
  min-width: 0;
  overflow: hidden;
  text-align: right;
}
.tab.wide {
  width: 180px;
}
.tab.current {
  background: #fafafa;
  color: #333;
}
.current .callout {
  top: -6px;
  bottom: -8px;
  left: -7px;
  right: -4px;
}
.tab.last {
  width: 53px;
  overflow: hidden;
}
.tabs button {
  display: flex;
  align-items: center;
  justify-content: center;
  width: 32px;
  border-right: 1px solid #c8c8c8;
}
.tabs button:last-child {
  border-right: 0;
  padding-left: 2px;
}
.tabs button svg {
  width: 17px;
  height: 17px;
}

/* status bar */
.status {
  position: relative;
  display: flex;
  gap: 23px;
  height: 21px;
  flex: none;
  padding-left: 3px;
  background: #ececec;
  color: #111;
  line-height: 22px;
}
.status-right {
  display: flex;
  margin-left: auto;
}
.user {
  display: flex;
  align-items: center;
  width: 128px;
  gap: 9px;
  padding: 0 7px;
  border: solid #ccc;
  border-width: 0 1px;
}
.user .caret {
  margin-left: auto;
  border-top-color: #000;
}
.user svg {
  width: 11px;
  height: 13px;
  fill: none;
  stroke: #666;
}
.cell {
  width: 27px;
  border-right: 1px solid #ccc;
}
.cell.gap {
  width: 47px;
}
.pager {
  display: flex;
  align-items: center;
  width: 72px;
  padding-left: 8px;
  border-right: 1px solid #ccc;
}
.pager svg {
  width: 56px;
  height: 10px;
  fill: #555;
}
.views {
  display: flex;
  align-items: center;
  gap: 9px;
  padding: 0 6px 0 8px;
}
.views svg {
  width: 12px;
  height: 11px;
}
.ime {
  position: absolute;
  right: 374px;
  top: -2px;
  display: flex;
  align-items: center;
  justify-content: space-around;
  width: 111px;
  height: 24px;
  border-radius: 4px;
  background: #333;
  color: #ddd;
  font-size: 16px;
}
.ime b {
  color: #1ba0f0;
  font-size: 22px;
  font-weight: 400;
}
.ime svg {
  width: 21px;
  height: 18px;
}

/* taskbar */
.taskbar {
  position: relative;
  display: flex;
  height: 40px;
  flex: none;
  background: linear-gradient(90deg, #213841, #20343f 55%, #16233f);
  color: #fff;
}
.start {
  display: flex;
  align-items: center;
  justify-content: center;
  width: 48px;
}
.start svg {
  width: 16px;
  height: 16px;
}
.task-search {
  display: flex;
  align-items: center;
  gap: 12px;
  width: 344px;
  padding-left: 12px;
  border: 1px solid #bbb;
  background: #f1f1f1;
  font-size: 14px;
  color: #222;
}
.task-search svg {
  width: 16px;
  height: 16px;
}
.task-search input {
  flex: 1;
}
.task-search input::placeholder {
  color: #333;
}
.app-btn {
  position: relative;
  display: flex;
  align-items: center;
  justify-content: center;
  width: 49px;
  flex: none;
}
.app-btn svg {
  width: 23px;
  height: 23px;
}
.app-btn::after {
  content: "";
  position: absolute;
  left: 4px;
  right: 4px;
  bottom: 0;
  height: 2px;
  background: #76b9ed;
}
.app-btn.plain::after {
  display: none;
}
.app-btn.focused {
  background: #4d606a;
}
.app-btn.focused::after {
  left: 0;
  right: 0;
}
.typora {
  width: 23px;
  height: 22px;
  border-radius: 4px;
  background: #fafafa;
  color: #222;
  font: bold 16px/22px "Liberation Serif", serif;
}
.tray {
  display: flex;
  align-items: center;
  gap: 9px;
  margin-left: auto;
  padding-right: 25px;
}
.tray svg {
  width: 15px;
  height: 15px;
}
.tray .news {
  width: 24px;
  height: 17px;
  margin-right: 8px;
}
.lang {
  margin: 0 3px;
}
.clock {
  display: flex;
  flex-direction: column;
  align-items: center;
  width: 70px;
  line-height: 18px;
  margin: 0 3px;
}
.tray .note {
  width: 16px;
  height: 16px;
}
.csdn {
  position: absolute;
  right: 15px;
  top: 5px;
  font-size: 19px;
  line-height: 26px;
  color: rgba(255, 255, 255, 0.6);
}
.activate {
  position: absolute;
  right: 96px;
  bottom: 88px;
  width: 193px;
  color: #b4b4b4;
}
.activate p {
  font-size: 20px;
  line-height: 28px;
}
.activate small {
  display: block;
  font-size: 15px;
}

/* calculation editor */
.calc {
  position: absolute;
  right: 0;
  top: 593px;
  display: flex;
  width: 748px;
  height: 330px;
  border: 1px solid #c8c8c8;
  border-right: 0;
  background: #fff;
  box-shadow: 0 2px 4px rgba(0, 0, 0, 0.3);
}
.calc-left {
  display: flex;
  flex-direction: column;
  width: 488px;
  flex: none;
  padding: 12px 12px 11px;
  border-right: 3px solid #d0d0d0;
}
.calc-head {
  display: flex;
  align-items: center;
  height: 36px;
  flex: none;
  padding-bottom: 12px;
  border-bottom: 1px solid #c8c8c8;
  color: #aaa;
}
.calc-head input {
  width: 200px;
  height: 23px;
  padding: 0 6px;
  border: 1px solid #c4c4c4;
  border-radius: 2px;
  font-size: 13px;
  color: #333;
}
.calc-head svg {
  width: 15px;
  height: 15px;
  margin: 0 3px 0 13px;
}
.calc-head button {
  margin-left: auto;
}
.calc-head button svg {
  margin: 0;
  stroke: #555;
}
.calc-body {
  position: relative;
  flex: 1;
  padding-top: 2px;
}
.hint {
  height: 18px;
  margin-right: 3px;
  background: #ffffec;
  font-size: 13px;
  line-height: 18px;
}
pre {
  padding: 1px 2px 0;
  color: #000;
  font: 13px/16px "Liberation Mono", "Noto Sans CJK SC", monospace;
}
pre em {
  font-size: 12px;
  font-style: normal;
}
.prm {
  color: #a77bca;
}
.fn {
  color: #2f7a96;
}
.fld {
  color: #f28e3c;
}
.str {
  color: #777;
}
.collapse {
  position: absolute;
  right: -9px;
  top: 111px;
  border: 5px solid transparent;
  border-left: 0;
  border-right: 7px solid #b0b0b0;
}
.default-calc {
  align-self: flex-end;
  margin-bottom: 5px;
  font-size: 13px;
  color: #1a0fff;
}
.calc-foot {
  display: flex;
  align-items: center;
}
.valid {
  margin-right: auto;
}
.deps {
  display: flex;
  align-items: center;
  gap: 4px;
  margin-right: 14px;
}
.deps .caret {
  border-top-color: #222;
}
.apply, .ok {
  width: 70px;
  height: 23px;
}
.apply {
  margin-right: 12px;
  border: 1px solid #ccc;
  color: #ccc;
}
.ok {
  background: #35cc97;
  color: #fff;
}
.calc-right {
  display: flex;
  flex: 1;
  min-width: 0;
  gap: 18px;
  padding: 12px 0 11px 12px;
  background: #eee;
  overflow: hidden;
}
.fn-col {
  display: flex;
  flex-direction: column;
  gap: 5px;
  width: 160px;
  flex: none;
}
.fn-col .combo {
  height: 25px;
  flex: none;
  font-size: 13px;
}
.fn-box {
  display: flex;
  flex-direction: column;
  flex: 1;
  min-height: 0;
  border: 1px solid #c4c4c4;
  background: #fff;
  font-size: 13px;
}
.fn-box input {
  height: 24px;
  flex: none;
  padding: 0 6px;
  border-bottom: 1px solid #999;
}
.fn-list {
  display: flex;
  justify-content: space-between;
  flex: 1;
  min-height: 0;
  overflow: hidden;
  background: linear-gradient(90deg, #fff calc(100% - 10px), #f6f6f6 0);
}
.fn-list ul {
  padding-left: 3px;
}
.fn-list i {
  width: 10px;
  height: 19px;
  background: #e0e0e0;
}
.fn-doc {
  padding-top: 8px;
  color: #555;
  font: 13px/20px "Liberation Mono", "Noto Sans CJK SC", monospace;
}
.fn-doc b {
  color: #333;
}
.fn-doc p {
  margin-top: 13px;
}
.calc .callout {
  left: -14px;
  top: -2px;
  width: 426px;
  height: 174px;
}
.calc .remark {
  left: -24px;
  top: 180px;
  color: #1a9bff;
}

/* parameter dialog */
.dialog {
  position: absolute;
  left: 436px;
  top: 588px;
  width: 589px;
  border: 1px solid #666;
  background: #f0f0f0;
  box-shadow: 0 4px 14px rgba(0, 0, 0, 0.4);
  color: #000;
}
.dialog-title {
  display: flex;
  align-items: center;
  justify-content: space-between;
  height: 30px;
  padding: 0 9px 0 8px;
  background: #fff;
}
.dialog-title svg {
  stroke: #000;
}
.dialog-body {
  padding: 12px 12px 11px 10px;
  font-size: 11px;
}
.name-row {
  display: flex;
  align-items: center;
  gap: 7px;
}
.name-row label {
  width: 40px;
  margin-left: 1px;
}
.name-input {
  display: flex;
  align-items: center;
  flex: 1;
  height: 21px;
  padding-left: 3px;
  border: 1px solid #0a78d0;
  background: #fff;
}
.name-input input {
  width: 67px;
}
.name-input i {
  width: 1px;
  height: 13px;
  background: #000;
}
.btn {
  width: 73px;
  height: 21px;
  border: 1px solid #adadad;
  background: #e1e1e1;
}
.btn.primary {
  border: 2px solid #0a78d7;
}
fieldset {
  position: relative;
  margin: 0;
  min-width: 0;
  border: 1px solid #dcdcdc;
}
legend {
  margin-left: 5px;
  padding: 0 3px;
  line-height: 16px;
}
.props {
  height: 173px;
  margin-top: 6px;
  padding: 8px 10px 0;
}
.prop {
  display: flex;
  align-items: center;
  height: 20px;
  margin-bottom: 10px;
}
.prop > label:first-child, .lab {
  width: 114px;
}
.drop {
  position: relative;
  width: 218px;
  height: 21px;
  border: 1px solid #adadad;
  background: #e1e1e1;
}
.drop.tall {
  height: 24px;
}
.drop select {
  width: 100%;
  height: 100%;
  padding-left: 4px;
  appearance: none;
}
.drop::after {
  content: "";
  position: absolute;
  right: 5px;
  top: 8px;
  border: 4px solid transparent;
  border-top: 5px solid #000;
  border-bottom: 0;
}
.radios label {
  margin-right: 14px;
}
label input[type="radio"] {
  appearance: none;
  width: 13px;
  height: 13px;
  margin-right: 6px;
  border: 1px solid #444;
  border-radius: 50%;
  background: #fff;
  vertical-align: -2px;
}
label input[type="radio"]:checked {
  background: radial-gradient(circle, #222 3px, #fff 4px);
}
.list {
  margin-top: 5px;
  padding: 8px 10px 7px 9px;
}
.list-row {
  display: flex;
  justify-content: space-between;
}
.table-box {
  width: 393px;
  border: 1px solid #828790;
  background: #fff;
}
table {
  width: 100%;
  border-collapse: collapse;
}
th, td {
  width: 50%;
  height: 21px;
  padding: 0 6px;
  border: solid #eee;
  border-width: 0 1px 1px 0;
  text-align: left;
  font-weight: 400;
}
.add td {
  color: #999;
}
.list-side {
  display: flex;
  flex-direction: column;
  justify-content: space-between;
  width: 145px;
}
.list-side .btn {
  width: 100%;
}
.arrow {
  display: inline-block;
  margin-left: 12px;
  border: 4px solid transparent;
  border-left: 5px solid #000;
  border-right: 0;
}
.list-side .drop {
  width: 100%;
}
.drop.off {
  background: #ccc;
  border-color: #bbb;
  color: #888;
}
.drop.off select {
  opacity: 1;
}
.drop.off::after {
  border-top-color: #999;
}
.list .callout {
  left: -2px;
  top: -21px;
  width: 266px;
  bottom: 3px;
}
.dialog-foot {
  display: flex;
  justify-content: flex-end;
  gap: 8px;
  margin-top: 9px;
}
.dialog .remark {
  left: 363px;
  top: 76px;
}
</style>
